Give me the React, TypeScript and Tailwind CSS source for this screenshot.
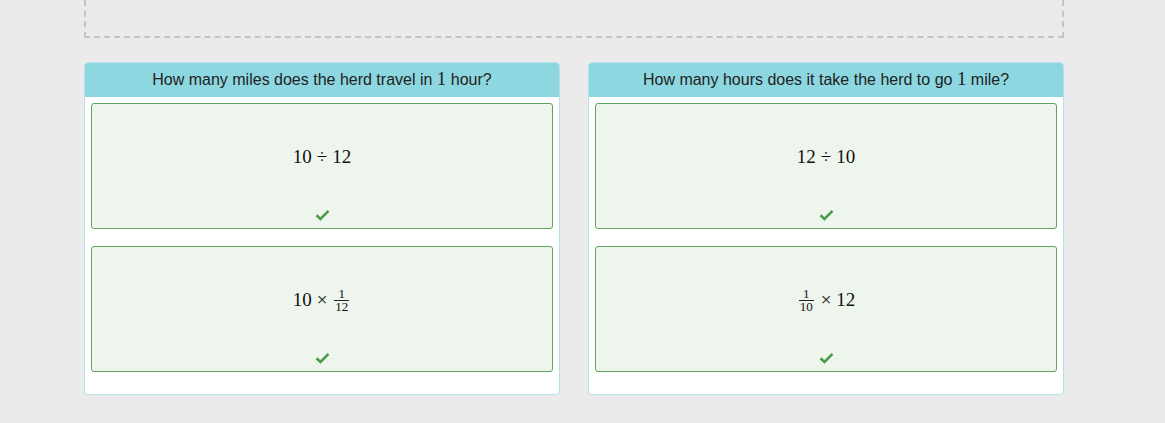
import { type ReactNode } from "react";

type CardProps = { children: ReactNode };

function Check() {
  return (
    <svg width="15" height="12" viewBox="0 0 15 12" className="text-[#4c9a4c]">
      <path d="M1.5 6.2 L5.5 10 L13.5 1.8" fill="none" stroke="currentColor" strokeWidth="2.6" />
    </svg>
  );
}

function Frac({ top, bottom }: { top: string; bottom: string }) {
  return (
    <span className="mx-[2px] inline-flex flex-col items-center align-middle text-[13px] leading-[12px]">
      <span className="px-[1px]">{top}</span>
      <span className="w-full border-t border-[#222]" />
      <span className="px-[1px]">{bottom}</span>
    </span>
  );
}

function Op({ children }: { children: ReactNode }) {
  return <span className="mx-[5px]">{children}</span>;
}

function AnswerCard({ children }: CardProps) {
  return (
    <div className="flex h-[126px] flex-col items-center rounded-[3px] border border-[#5fa35d] bg-[#edf5ec]">
      <div className="mt-[40px] flex h-[26px] items-center font-['Liberation_Serif',serif] text-[19px] text-[#111]">
        {children}
      </div>
      <div className="mt-auto mb-[7px]">
        <Check />
      </div>
    </div>
  );
}

function Column({ title, children }: { title: ReactNode; children: ReactNode }) {
  return (
    <div className="flex w-[476px] flex-col overflow-hidden rounded-[4px] border border-[#b5e1e8] bg-white">
      <div className="flex h-[34px] items-center justify-center bg-[#8dd7e1] pb-[2px] text-[16px] text-[#222]">
        {title}
      </div>
      <div className="flex flex-col gap-[17px] px-[6px] pt-[6px] pb-[22px]">{children}</div>
    </div>
  );
}

export default function App() {
  return (
    <div className="h-[423px] w-[1165px] bg-[#ebebeb] font-['Liberation_Sans',Arial,sans-serif]">
      <div className="ml-[84px] w-[980px]">
        <div className="h-[38px] border-x-2 border-b-2 border-dashed border-[#c4c4c4]" />
        <div className="mt-[24px] flex gap-[28px]">
          <Column
            title={
              <span>
                How many miles does the herd travel in{" "}
                <span className="font-['Liberation_Serif',serif] text-[19px]">1</span> hour?
              </span>
            }
          >
            <AnswerCard>
              10<Op>÷</Op>12
            </AnswerCard>
            <AnswerCard>
              10<Op>×</Op>
              <Frac top="1" bottom="12" />
            </AnswerCard>
          </Column>
          <Column
            title={
              <span>
                How many hours does it take the herd to go{" "}
                <span className="font-['Liberation_Serif',serif] text-[19px]">1</span> mile?
              </span>
            }
          >
            <AnswerCard>
              12<Op>÷</Op>10
            </AnswerCard>
            <AnswerCard>
              <Frac top="1" bottom="10" />
              <Op>×</Op>12
            </AnswerCard>
          </Column>
        </div>
      </div>
    </div>
  );
}
